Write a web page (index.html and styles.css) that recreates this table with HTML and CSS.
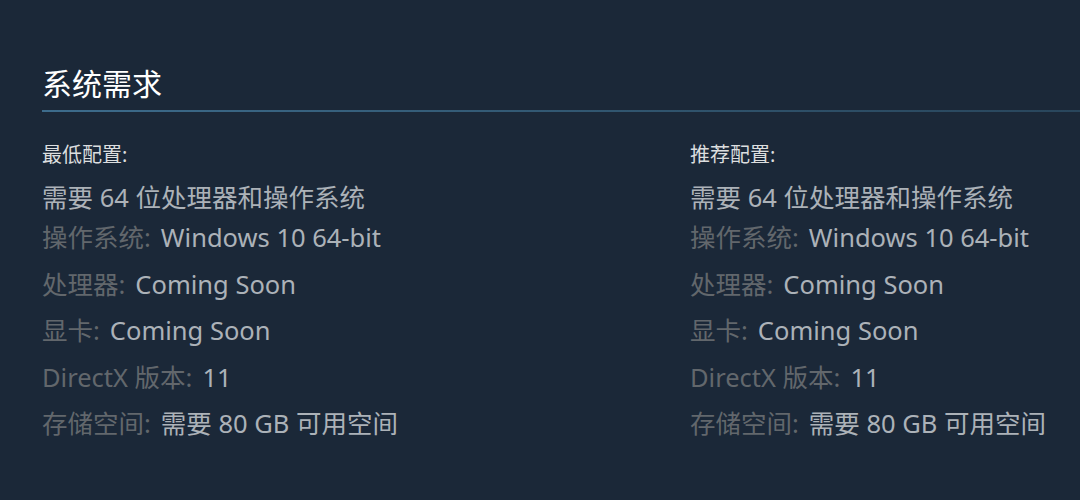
FILE: index.html
```html
<!DOCTYPE html>
<html lang="zh-CN">
<head>
<meta charset="utf-8">
<link rel="stylesheet" href="styles.css">
</head>
<body>
<section class="sysreq">
  <h2 class="sysreq-title">系统需求</h2>
  <div class="sysreq-cols">
    <div class="col">
      <div class="col-head">最低配置:</div>
      <ul class="req-list">
        <li class="note">需要 64 位处理器和操作系统</li>
        <li><span class="lbl">操作系统:</span>Windows 10 64-bit</li>
        <li><span class="lbl">处理器:</span>Coming Soon</li>
        <li><span class="lbl">显卡:</span>Coming Soon</li>
        <li><span class="lbl">DirectX 版本:</span>11</li>
        <li><span class="lbl">存储空间:</span>需要 80 GB 可用空间</li>
      </ul>
    </div>
    <div class="col">
      <div class="col-head">推荐配置:</div>
      <ul class="req-list">
        <li class="note">需要 64 位处理器和操作系统</li>
        <li><span class="lbl">操作系统:</span>Windows 10 64-bit</li>
        <li><span class="lbl">处理器:</span>Coming Soon</li>
        <li><span class="lbl">显卡:</span>Coming Soon</li>
        <li><span class="lbl">DirectX 版本:</span>11</li>
        <li><span class="lbl">存储空间:</span>需要 80 GB 可用空间</li>
      </ul>
    </div>
  </div>
</section>
</body>
</html>
```

FILE: styles.css
```css
html, body {
  margin: 0;
  padding: 0;
  background: #1b2838;
  overflow: hidden;
}

body {
  width: 1080px;
  height: 500px;
  font-family: "Noto Sans", "Noto Sans CJK SC", sans-serif;
}

.sysreq {
  padding: 66px 0 0 42px;
}

.sysreq-title {
  margin: 0;
  font-size: 30px;
  font-weight: 400;
  line-height: 36px;
  color: #ffffff;
}

.sysreq-title::after {
  content: "";
  display: block;
  height: 2px;
  margin-top: 8px;
  background: linear-gradient(to right, #3d6c8c 0%, #30546d 60%, #29465c 100%);
}

.sysreq-cols {
  display: grid;
  grid-template-columns: 648px 1fr;
  padding-top: 29px;
}

.col-head {
  font-size: 20px;
  line-height: 28px;
  color: #dcdedf;
}

.req-list {
  list-style: none;
  margin: 11px 0 0;
  padding: 0;
  font-size: 25.5px;
  line-height: 34px;
  color: #acb2b8;
}

.req-list li {
  margin-bottom: 12.5px;
  white-space: nowrap;
}

.req-list li.note {
  margin-bottom: 6px;
}

.lbl {
  color: #62676c;
  padding-right: 10px;
}
```
